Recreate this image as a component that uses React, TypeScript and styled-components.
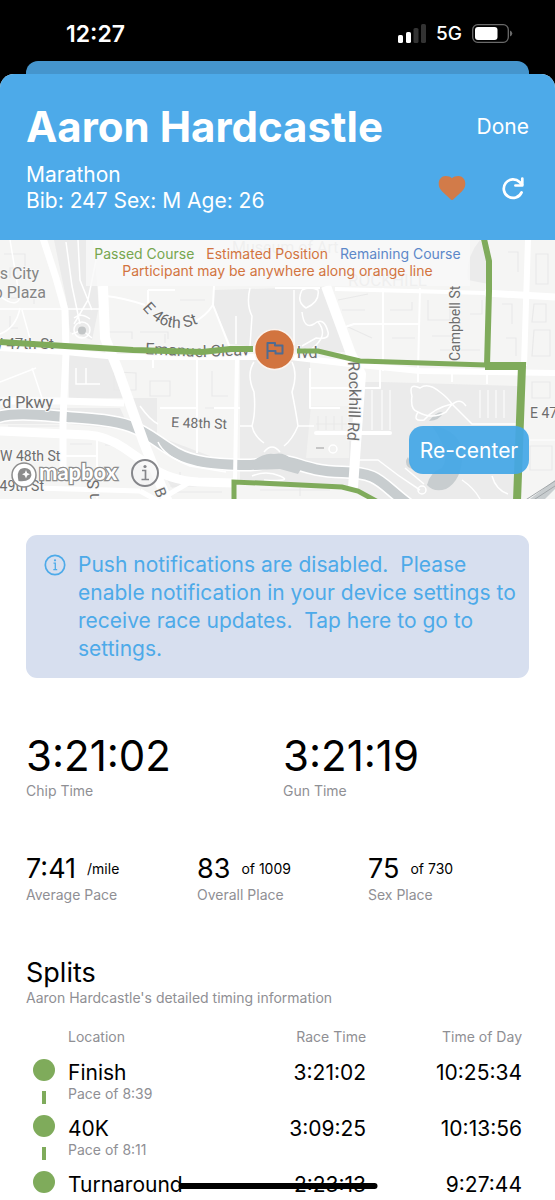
import React from "react";
import styled, { createGlobalStyle } from "styled-components";

const blue = "#4daae9";
const orange = "#d2743f";
const green = "#7fab5b";
const grey = "#8f8f94";

const GlobalStyle = createGlobalStyle`
  *, *::before, *::after { box-sizing: border-box; }
  body { margin: 0; background: #000; font-family: Inter, "Liberation Sans", sans-serif; color: #000; }
  h1, h2, p, dl, dd, dt { margin: 0; font-weight: 400; }
  button { font: inherit; border: 0; padding: 0; background: none; cursor: pointer; }
`;

const Screen = styled.div`
  position: relative;
  height: 100vh;
  overflow: hidden;
  background: #000;
`;

const StatusBar = styled.div`
  display: flex;
  align-items: center;
  justify-content: space-between;
  height: 61px;
  padding: 6px 42px 0 66px;
  color: #fff;
`;

const Clock = styled.time`
  font-size: 23px;
  font-weight: 600;
`;

const StatusIcons = styled.div`
  display: flex;
  align-items: center;
  gap: 10px;
  font-size: 19px;
  font-weight: 500;

  svg { display: block; }
`;

const SheetBehind = styled.div`
  height: 13px;
  margin: 0 26px;
  border-radius: 12px 12px 0 0;
  background: #4595cd;
`;

const Sheet = styled.main`
  border-radius: 14px 14px 0 0;
  background: #fff;
  overflow: hidden;
`;

const Header = styled.header`
  height: 166px;
  padding: 26px 26px 0;
  background: ${blue};
  color: #fff;
`;

const HeaderRow = styled.div`
  display: flex;
  justify-content: space-between;
  align-items: center;
`;

const Name = styled.h1`
  font-size: 42px;
  line-height: 54px;
  font-weight: 700;
`;

const TextButton = styled.button`
  font-size: 21px;
  line-height: 28px;
  color: #fff;
`;

const Details = styled.div`
  padding-top: 8px;
  font-size: 21px;
  line-height: 26px;
`;

const HeaderActions = styled.div`
  display: flex;
  align-items: center;
  gap: 36px;
  padding: 8px 5px 0 0;
`;

const IconButton = styled.button`
  display: block;
  color: #fff;

  svg { display: block; }
`;

const MapPanel = styled.section`
  position: relative;
  height: 259px;
  background: #f4f4f3;
  overflow: hidden;
`;

const MapDrawing = styled.svg`
  display: block;
  width: 100%;
  height: 100%;
`;

const Legend = styled.div`
  position: absolute;
  top: 0;
  left: 0;
  right: 0;
  padding-top: 5px;
  text-align: center;
  font-size: 14px;
  line-height: 17px;
`;

const LegendRow = styled.div`
  display: flex;
  justify-content: center;
  gap: 12px;
`;

const LegendLabel = styled.span<{ $color: string }>`
  color: ${(p) => p.$color};
`;

const Recenter = styled.button`
  position: absolute;
  right: 26px;
  bottom: 25px;
  width: 120px;
  height: 48px;
  border-radius: 14px;
  background: rgba(68, 167, 230, 0.93);
  color: #fff;
  font-size: 21px;
`;

const MapInfo = styled.button`
  position: absolute;
  left: 130px;
  bottom: 11px;

  svg { display: block; }
`;

const Body = styled.div`
  padding: 36px 26px 0;
`;

const Notice = styled.button`
  display: flex;
  align-items: flex-start;
  gap: 12px;
  width: 100%;
  padding: 16px 8px 15px 18px;
  border-radius: 11px;
  background: #d7dfef;
  color: ${blue};
  text-align: left;
  font-size: 21px;
  line-height: 28px;

  svg { flex: none; margin-top: 3px; }
  span { white-space: pre-wrap; }
`;

const Stats = styled.dl<{ $columns: number; $gap: number; $top: number }>`
  display: grid;
  grid-template-columns: repeat(${(p) => p.$columns}, 1fr);
  column-gap: ${(p) => p.$gap}px;
  padding-top: ${(p) => p.$top}px;
`;

const Stat = styled.div`
  display: flex;
  flex-direction: column-reverse;
`;

const StatLabel = styled.dt`
  font-size: 14px;
  line-height: 18px;
  color: ${grey};
`;

const StatValue = styled.dd<{ $large?: boolean }>`
  display: flex;
  align-items: center;
  gap: 11px;
  font-size: ${(p) => (p.$large ? 42 : 27)}px;
  line-height: ${(p) => (p.$large ? 52 : 34)}px;
  white-space: nowrap;
`;

const Unit = styled.small`
  font-size: 14px;
`;

const SplitsTitle = styled.h2`
  padding-top: 53px;
  font-size: 27px;
  line-height: 32px;
`;

const Caption = styled.p`
  font-size: 14px;
  line-height: 18px;
  color: ${grey};
`;

const SplitsTable = styled.table`
  width: 100%;
  margin-top: 21px;
  border-collapse: collapse;
  table-layout: fixed;
`;

const HeadCell = styled.th<{ $right?: boolean; $width?: string }>`
  width: ${(p) => p.$width ?? "auto"};
  height: 31px;
  padding: 0 ${(p) => (p.$right ? 7 : 0)}px 0 0;
  vertical-align: top;
  font-size: 14px;
  line-height: 18px;
  font-weight: 400;
  color: ${grey};
  text-align: ${(p) => (p.$right ? "right" : "left")};
`;

const Cell = styled.td<{ $right?: boolean }>`
  height: 56px;
  padding: 0 ${(p) => (p.$right ? 7 : 0)}px 0 0;
  vertical-align: top;
  font-size: 21px;
  line-height: 27px;
  text-align: ${(p) => (p.$right ? "right" : "left")};
`;

const Marker = styled.div`
  display: flex;
  flex-direction: column;
  align-items: center;
  gap: 10px;
  width: 35px;
`;

const Dot = styled.span`
  width: 22px;
  height: 22px;
  border-radius: 50%;
  background: ${green};
`;

const Dash = styled.span`
  width: 4px;
  height: 13px;
  background: ${green};
`;

const Pace = styled.div`
  font-size: 14px;
  line-height: 16px;
  color: ${grey};
`;

const HomeIndicator = styled.div`
  position: absolute;
  left: 50%;
  bottom: 11px;
  width: 199px;
  height: 6px;
  border-radius: 3px;
  background: #000;
  transform: translateX(-50%);
`;

function SignalIcon() {
  return (
    <svg width="28" height="19" viewBox="0 0 28 19" aria-hidden="true">
      <rect x="0" y="11" width="5" height="8" rx="1.6" fill="#fff" />
      <rect x="8" y="8" width="5" height="11" rx="1.6" fill="#fff" />
      <rect x="15.500" y="4" width="5" height="15" rx="1.6" fill="#333" />
      <rect x="23" y="0" width="5" height="19" rx="1.6" fill="#333" />
    </svg>
  );
}

function BatteryIcon() {
  return (
    <svg width="41" height="19" viewBox="0 0 41 19" aria-hidden="true">
      <rect x="0.7" y="0.7" width="35.600" height="17.600" rx="5" fill="none" stroke="#6a6a6a" strokeWidth="1.300" />
      <rect x="3" y="3" width="22.500" height="13" rx="3" fill="#fff" />
      <path d="M38 6.500 Q40.300 7.300 40.300 9.500 Q40.300 11.700 38 12.500Z" fill="#6a6a6a" />
    </svg>
  );
}

function HeartIcon() {
  return (
    <svg width="28" height="26" viewBox="0 0 28 26" aria-hidden="true">
      <path
        d="M14 25 C13.300 25 12.800 24.400 12 23.700 L4.200 16.400 C1.700 14 .7 11.600 .7 8.500 C.7 4.300 3.700 1 7.600 1 C10.300 1 12.600 1.700 14 3.300 C15.400 1.700 17.700 1 20.400 1 C24.300 1 27.300 4.300 27.300 8.500 C27.300 11.600 26.300 14 23.800 16.400 L16 23.700 C15.200 24.400 14.700 25 14 25Z"
        fill="#d27b49"
      />
    </svg>
  );
}

function RefreshIcon() {
  return (
    <svg width="22" height="23" viewBox="0 0 22 23" fill="none" stroke="#fff" strokeWidth="2.700" aria-hidden="true">
      <path d="M19.600 15.400 A9.300 9.300 0 1 1 17.600 5 L20 7.600" strokeLinecap="round" />
      <path d="M20.300 1.600 V8.500 H13.400" strokeLinecap="round" strokeLinejoin="round" />
    </svg>
  );
}

function InfoIcon() {
  return (
    <svg width="22" height="22" viewBox="0 0 22 22" fill="none" stroke={blue} aria-hidden="true">
      <circle cx="11" cy="11" r="9.700" strokeWidth="1.700" />
      <path d="M9.500 9.200 H11.300 V15.500 M9.300 15.700 H13.200" strokeWidth="1.300" />
      <circle cx="11" cy="6.300" r="1.100" fill={blue} stroke="none" />
    </svg>
  );
}

const riverPath =
  "M-2 177 C15 172 40 175 67 177 S112 180 130 186 S158 203 176 213 S215 224 240 225 S262 221 280 221 S304 231 342 232 S378 241 408 264";

function CourseMap() {
  return (
    <MapDrawing viewBox="0 0 555 259" preserveAspectRatio="xMidYMid slice" role="img" aria-label="Course map">
      <rect width="555" height="259" fill="#f5f5f4" />
      {/* parks */}
      <g fill="#ebebeb">
        <path d="M54 0 H93 L99 66 L92 100 L70 92 L66 58Z" />
        <path d="M69 113 H108 L126 158 H69Z" />
        <path d="M214 50 L322 47 L346 112 H300 L230 104 L214 66Z" />
        <path d="M240 120 H310 V168 H352 V142 H382 V142 L518 146 V259 H375 L345 246 H280 L240 240Z" />
        <path d="M468 40 Q465 18 480 0 L489 20 V44 L478 42Z" />
        <path d="M126 158 H157 V196 L210 216 V226 L170 214 L140 192Z" />
        <path d="M0 168 H120 L130 190 L70 184 H0Z" />
        <path d="M162 232 L190 243 L172 248Z" />
      </g>
      <path d="M311 166 H349 V218 H306Z" fill="#f2f2f1" />
      {/* building outlines */}
      <g fill="none" stroke="#e9e9e9" strokeWidth="1.200">
        <path d="M4 14 H25 V28 H10 V38 M8 58 H34 V64 M10 76 V88 H18 M108 80 V92 H132 V99 M140 92 H168 V99 M180 60 H205 M165 94 V103 M114 132 V150 H136 V133 Z M150 141 H170 V156 H150Z M170 168 H188 M212 131 V156 H228 M205 168 H226" />
        <path d="M8 186 H62 M70 204 H92 M105 205 H124" />
        <path d="M338 60 L368 54 M342 70 H365 M390 70 H412 V62 M428 60 V80 H450 V64 M392 98 H415 M432 96 H455 M440 110 H480 M470 74 H482 V60 M536 14 H548 V44 H536Z M534 64 H546 V82 H532Z M534 90 H550 V116 H532Z M502 64 H512 V84 M506 98 H516 V116 M532 142 H550 V158 H532Z M530 206 H552 V230 H530Z M346 86 L372 98 M508 12 H518 V32" />
        <path d="M318 176 V190 M326 176 V190 M334 176 V190 M342 176 V190 M316 184 H348" />
        <path d="M170 246 H226 M176 252 H222 M180 232 V244 M260 250 H330 M300 248 V256" />
      </g>
      {/* river and ponds */}
      <g fill="none" strokeLinejoin="round">
        <path d={riverPath} stroke="#fff" strokeWidth="13" />
        <path d={riverPath} stroke="#c8cdcf" strokeWidth="10" />
      </g>
      <g fill="#c8cdcf">
        <path d="M252 222 Q264 212 274 214 Q284 212 290 218 L304 224 L298 234 L280 229 L254 230Z" />
        <path d="M432 186 Q462 190 462 216 Q462 240 446 249 Q434 253 427 245 Q430 232 442 228 Q452 214 432 186Z" />
        <path d="M429 181 Q438 170 443 173 Q440 180 429 181Z" />
        <path d="M408 217 Q404 222 408 227 L414 230Z" />
        <path d="M530 259 L555 240 V249 L545 259Z" />
      </g>
      {/* small paths */}
      <g fill="none" stroke="#fff" strokeWidth="1.500">
        <path d="M66 2 L72 46 L80 84 M78 0 L80 40 L92 70 M96 20 L88 60 L74 84 M74 78 Q81 72 90 79 M72 94 L82 90 L92 98 M0 56 Q20 72 22 50 M0 94 Q16 88 20 68 M22 70 L34 113 M0 69 H100 M10 0 L18 48" />
        <circle cx="82" cy="90" r="8" />
        <path d="M302 50 Q296 62 306 68 Q320 62 318 50 Q310 46 302 50 M302 72 Q304 90 314 84 Q324 76 328 92 Q330 100 316 98 L302 106 M250 48 Q246 64 252 76 L250 106 M236 76 V104 M294 50 V110 M310 110 Q330 96 318 82" />
        <path d="M254 122 Q246 134 254 152 Q256 172 252 186 Q254 196 264 203 M292 122 Q298 134 292 152 Q296 172 298 186 Q292 200 284 206 M240 186 H252 M298 186 H314" />
        <path d="M412 156 Q408 142 420 148 Q428 142 440 152 Q448 158 452 164 M412 156 Q410 170 418 172 Q432 180 446 172 Q458 154 466 166 M418 172 Q412 182 424 180 Q434 168 452 164 M452 164 L472 184 H518" />
        <path d="M354 220 L378 220 Q398 236 420 250 M405 228 L424 244 M492 236 Q496 250 508 254 M462 240 Q474 248 480 259" />
        <circle cx="422" cy="250" r="4" />
        <circle cx="333" cy="209" r="4" />
        <path d="M140 166 Q150 180 158 184 M158 202 Q164 216 190 226 L226 232 M264 212 Q272 202 280 212 M252 236 Q266 230 280 236 T264 240" />
        <path d="M372 150 V190 M382 150 V190 M390 150 V190 M480 150 V178 M488 150 V178 M496 150 V178 M504 150 V178 M530 200 H555" strokeWidth="1" />
        <path d="M76 128 V144 H100 M86 128 V144 M32 128 L42 158 M0 142 L36 128" />
      </g>
      <path d="M316 193 H390" stroke="#fff" strokeWidth="4" strokeLinecap="round" />
      <path d="M316 208 H324" stroke="#c6c6c6" strokeWidth="2" />
      {/* streets */}
      <g fill="none" stroke="#fff" strokeLinejoin="round">
        <path d="M106 56 Q124 58 145 65 M194 82 Q206 76 213 65 L214 46 M213 65 L230 108 M148 50 V66 M148 50 H175 M383 48 V131 M420 48 L418 131 M345 87 L354 84 H419 M153 113 V128 M197 113 V213 M196 168 H160 M97 196 V259 M63 216 H97 M240 168 H214 M275 48 H320 M310 128 V168 H340 M310 148 H380 V128 M418 130 V142 M452 130 V142 M487 130 V144" strokeWidth="2" />
        <path d="M43 -2 L56 38 L65 70 L66 113 L63 180 V228" strokeWidth="7" />
        <path d="M103 46 L105 98 L118 130 L144 203 L162 248 L168 262" strokeWidth="10" />
        <path d="M0 108 L66 112 L117 117 H290 L350 124 L420 131 L555 133" strokeWidth="6" />
        <path d="M335 49 L485 53" strokeWidth="4" />
        <path d="M485 53 L555 57" strokeWidth="7" />
        <path d="M326 46 L351 114 L361 134 L357 190 L353 248" strokeWidth="10" />
        <path d="M528 0 L524 126" strokeWidth="6" />
        <path d="M0 161 L63 161 L124 163" strokeWidth="7" />
        <path d="M0 191 L88 195 Q106 196 124 208 L150 226 Q168 240 198 242 L234 243" strokeWidth="9" />
        <path d="M237 118 L235 240" strokeWidth="4" />
        <path d="M0 247 L140 251 M140 251 L160 262 M166 256 L190 242" strokeWidth="5" />
      </g>
      <circle cx="82" cy="90.500" r="4" fill="#c3c6c7" />
      <path d="M524 261 L555 241 M532 261 L555 246" stroke="#a2a7aa" strokeWidth="1" />
      <g fontFamily="Roboto, sans-serif" fill="#cdcdcd">
        <text x="232" y="13" fontSize="16">Museum of Art</text>
        <text x="348" y="46" fontSize="17">ROCKHILL</text>
      </g>
      <rect x="86" y="0" width="384" height="46" fill="#f8f8f8" opacity="0.78" />
      {/* street names */}
      <defs>
        <path id="st46" d="M142 68 Q158 88 178 88 Q190 88 206 80" />
        <path id="rockhill" d="M348 122 Q351 160 346 214" />
        <path id="cleaver" d="M145 114 L200 117 L256 115 V115 L330 117" />
      </defs>
      <g fontFamily="Roboto, sans-serif" fontSize="16" fill="#6d6d6d" stroke="#f8f8f8" strokeWidth="2" paintOrder="stroke">
        <text x="39" y="39" fill="#858585" textAnchor="end">as City</text>
        <text x="46" y="58" fill="#858585" textAnchor="end">b Plaza</text>
        <text><textPath href="#st46">E 46th St</textPath></text>
        <text x="54" y="109" textAnchor="end" fontSize="15">W 47th St</text>
        <text><textPath href="#cleaver">Emanuel Cleav</textPath></text>
        <text x="297" y="118">lvd</text>
        <text><textPath href="#rockhill">Rockhill Rd</textPath></text>
        <text transform="translate(460 121) rotate(-90)" fontSize="14">Campbell St</text>
        <text x="53" y="168" textAnchor="end">rd Pkwy</text>
        <text x="171" y="187" transform="rotate(2 171 187)" fontSize="14">E 48th St</text>
        <text x="0" y="221" fontSize="14">W 48th St</text>
        <text x="44" y="251" textAnchor="end" fontSize="14">49th St</text>
        <text x="530" y="178" fontSize="14">E 47th St</text>
        <text transform="translate(99 262) rotate(-90)">n S</text>
        <text transform="translate(154 250) rotate(68)" fontSize="15">B</text>
      </g>
      {/* race course */}
      <g fill="none" stroke={green} strokeWidth="6">
        <path d="M0 102 L65 106 L133 110 L202 112 L230 109 H253" />
        <path d="M297 111 H318 L360 121 L486 125" strokeWidth="5" />
        <path d="M484 -1 L489 21 V51 L487 126" />
        <path d="M485 126 H522 L517 261" strokeWidth="8" />
        <path d="M234 261 V242 L280 244 L342 247 L358 251 L378 262" strokeWidth="5" />
      </g>
      <circle cx="274.500" cy="109.500" r="20" fill={orange} stroke="#fbf3ee" strokeWidth="1.500" />
      <path d="M267.500 119 V103 H275 V105.500 H282.500 V113.500 H275.500 V111 H267.500" fill="none" stroke="#4f6b91" strokeWidth="2" strokeLinejoin="round" />
      {/* map provider mark */}
      <circle cx="24" cy="235" r="12" fill="#fff" stroke="#8d8d8d" strokeWidth="1.500" />
      <path d="M18.500 241 Q16.500 232 20.500 229 Q26 226.500 30 230 Q33 235 29.500 239 Q25.500 242 18.500 241Z" fill="#8d8d8d" />
      <path d="M26 230 L27.200 233 L30 234.200 L27.200 235.400 L26 238.400 L24.800 235.400 L22 234.200 L24.800 233Z" fill="#fff" />
      <text x="39" y="240" fontFamily="Lato, sans-serif" fontSize="22" fontWeight="700" fill="#fff" stroke="#8d8d8d" strokeWidth="2.500" paintOrder="stroke">
        mapbox
      </text>
    </MapDrawing>
  );
}

const times = [
  { label: "Chip Time", value: "3:21:02" },
  { label: "Gun Time", value: "3:21:19" },
];

const places = [
  { label: "Average Pace", value: "7:41", unit: "/mile" },
  { label: "Overall Place", value: "83", unit: "of 1009" },
  { label: "Sex Place", value: "75", unit: "of 730" },
];

const splits = [
  { location: "Finish", pace: "8:39", race: "3:21:02", day: "10:25:34" },
  { location: "40K", pace: "8:11", race: "3:09:25", day: "10:13:56" },
  { location: "Turnaround", pace: "7:37", race: "2:23:13", day: "9:27:44" },
];

export default function App() {
  return (
    <Screen>
      <GlobalStyle />
      <StatusBar>
        <Clock>12:27</Clock>
        <StatusIcons>
          <SignalIcon />
          <span>5G</span>
          <BatteryIcon />
        </StatusIcons>
      </StatusBar>
      <SheetBehind />
      <Sheet>
        <Header>
          <HeaderRow>
            <Name>Aaron Hardcastle</Name>
            <TextButton type="button">Done</TextButton>
          </HeaderRow>
          <HeaderRow>
            <Details>
              <p>Marathon</p>
              <p>Bib: 247 Sex: M Age: 26</p>
            </Details>
            <HeaderActions>
              <IconButton type="button" aria-label="Favorite"><HeartIcon /></IconButton>
              <IconButton type="button" aria-label="Refresh"><RefreshIcon /></IconButton>
            </HeaderActions>
          </HeaderRow>
        </Header>

        <MapPanel>
          <CourseMap />
          <Legend>
            <LegendRow>
              <LegendLabel $color="#76a64f">Passed Course</LegendLabel>
              <LegendLabel $color={orange}>Estimated Position</LegendLabel>
              <LegendLabel $color="#5d88c9">Remaining Course</LegendLabel>
            </LegendRow>
            <LegendLabel $color={orange}>Participant may be anywhere along orange line</LegendLabel>
          </Legend>
          <MapInfo type="button" aria-label="Map information">
            <svg width="30" height="30" viewBox="0 0 30 30" fill="none" stroke="#85868a" strokeWidth="2">
              <circle cx="15" cy="15" r="13" fill="#f4f4f3" fillOpacity="0.600" />
              <path d="M12 12.500 H15.500 V21 M11.500 21.500 H19" strokeWidth="1.700" />
              <circle cx="15" cy="8.500" r="1.600" fill="#85868a" stroke="none" />
            </svg>
          </MapInfo>
          <Recenter type="button">Re-center</Recenter>
        </MapPanel>

        <Body>
          <Notice type="button">
            <InfoIcon />
            <span>
              {"Push notifications are disabled.  Please enable notification in your device settings to receive race updates.  Tap here to go to settings."}
            </span>
          </Notice>

          <Stats $columns={2} $gap={11} $top={52}>
            {times.map((t) => (
              <Stat key={t.label}>
                <StatLabel>{t.label}</StatLabel>
                <StatValue $large>{t.value}</StatValue>
              </Stat>
            ))}
          </Stats>
          <Stats $columns={3} $gap={10} $top={52}>
            {places.map((p) => (
              <Stat key={p.label}>
                <StatLabel>{p.label}</StatLabel>
                <StatValue>
                  {p.value}
                  <Unit>{p.unit}</Unit>
                </StatValue>
              </Stat>
            ))}
          </Stats>

          <SplitsTitle>Splits</SplitsTitle>
          <Caption>Aaron Hardcastle's detailed timing information</Caption>
          <SplitsTable>
            <thead>
              <tr>
                <HeadCell $width="42px" aria-label="Status" />
                <HeadCell>Location</HeadCell>
                <HeadCell $right $width="32%">Race Time</HeadCell>
                <HeadCell $right $width="31%">Time of Day</HeadCell>
              </tr>
            </thead>
            <tbody>
              {splits.map((s) => (
                <tr key={s.location}>
                  <Cell>
                    <Marker>
                      <Dot />
                      <Dash />
                    </Marker>
                  </Cell>
                  <Cell>
                    {s.location}
                    <Pace>Pace of {s.pace}</Pace>
                  </Cell>
                  <Cell $right>{s.race}</Cell>
                  <Cell $right>{s.day}</Cell>
                </tr>
              ))}
            </tbody>
          </SplitsTable>
        </Body>
      </Sheet>
      <HomeIndicator />
    </Screen>
  );
}
